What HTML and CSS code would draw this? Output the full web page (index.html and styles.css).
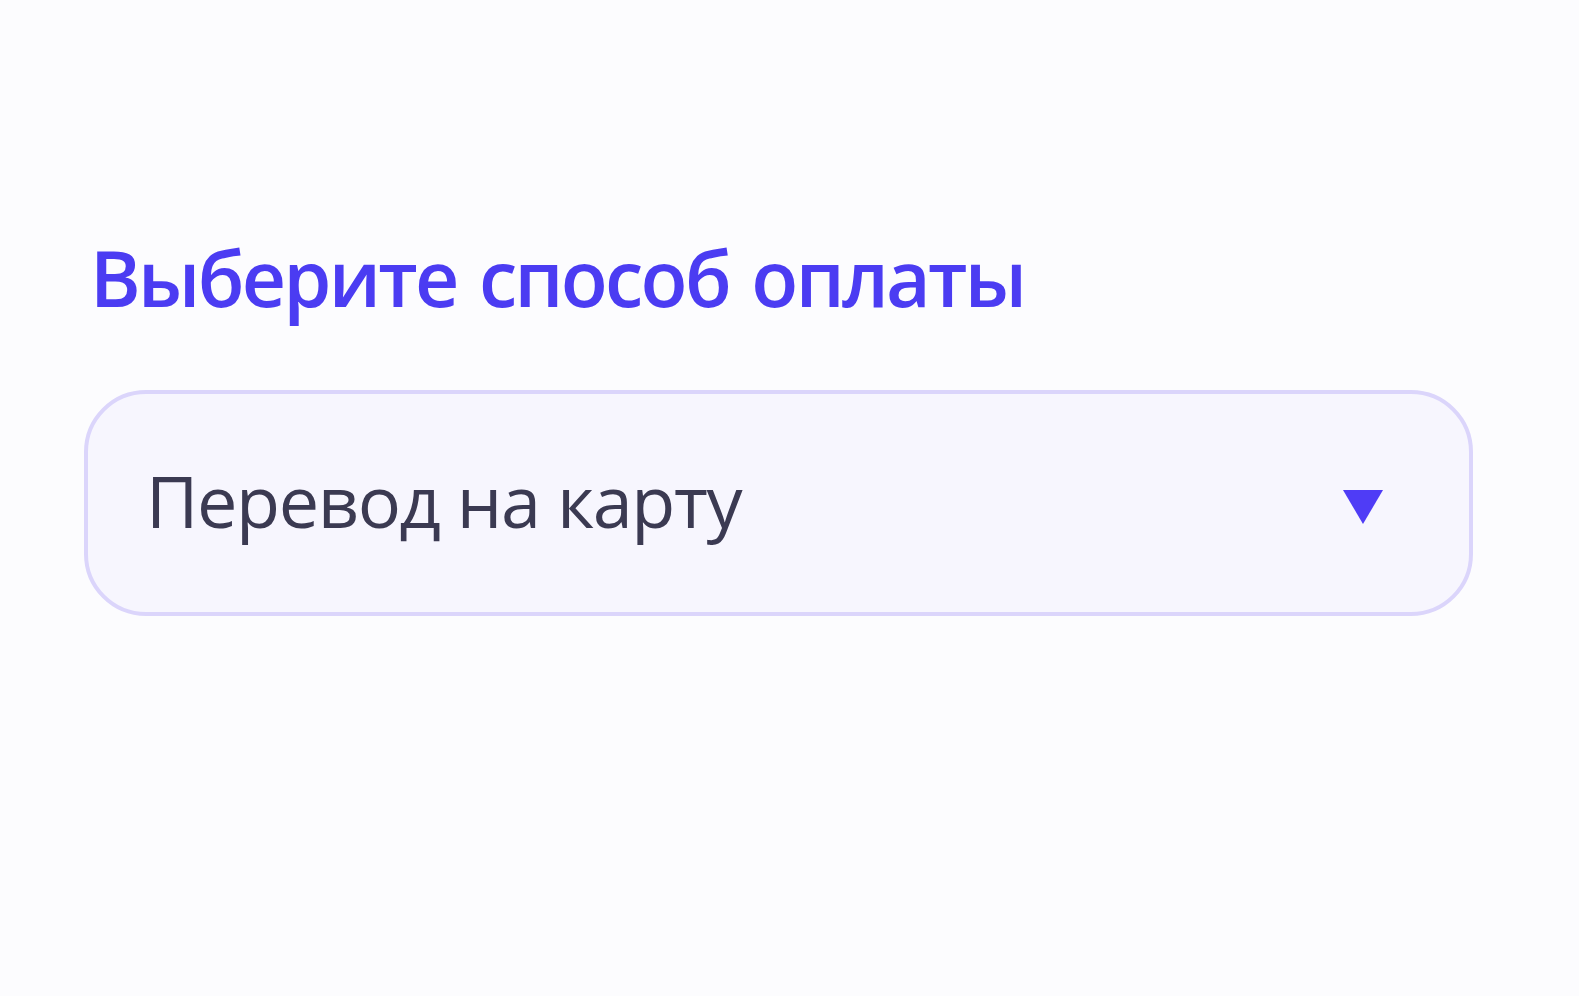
FILE: index.html
```html
<!DOCTYPE html>
<html lang="ru">
<head>
    <meta charset="UTF-8">
    <meta name="viewport" content="width=device-width, initial-scale=1.0">
    <title>Способ оплаты</title>
    <link rel="stylesheet" href="styles.css">
</head>
<body>
    <div class="payment">
        <h1 class="payment-title">Выберите способ оплаты</h1>
        <div class="payment-select">
            <span class="payment-value">Перевод на карту</span>
            <svg class="payment-arrow" width="42" height="36" viewBox="0 0 42 36">
                <path d="M1 1 L41 1 L21 35 Z" fill="#4f3cf6"/>
            </svg>
        </div>
    </div>
</body>
</html>
```

FILE: styles.css
```css
body {
    margin: 0;
    background-color: #fcfcfe;
    font-family: "Open Sans", "Noto Sans", sans-serif;
}
.payment {
    padding: 232px 106px 0 84px;
}
.payment-title {
    margin: 0 0 66px 6px;
    font-size: 77px;
    line-height: 1.2;
    font-weight: 600;
    color: #4b3cf2;
    letter-spacing: -2.7px;
    word-spacing: 5px;
}
.payment-select {
    display: flex;
    justify-content: space-between;
    align-items: center;
    height: 218px;
    padding: 0 85px 0 58px;
    background-color: #f7f6fe;
    border: 4px solid #dbd5fb;
    border-radius: 62px;
}
.payment-value {
    font-size: 72px;
    color: #3b3a52;
    letter-spacing: -1.4px;
    margin-top: -6px;
}
.payment-arrow {
    margin-top: 8px;
}
```
